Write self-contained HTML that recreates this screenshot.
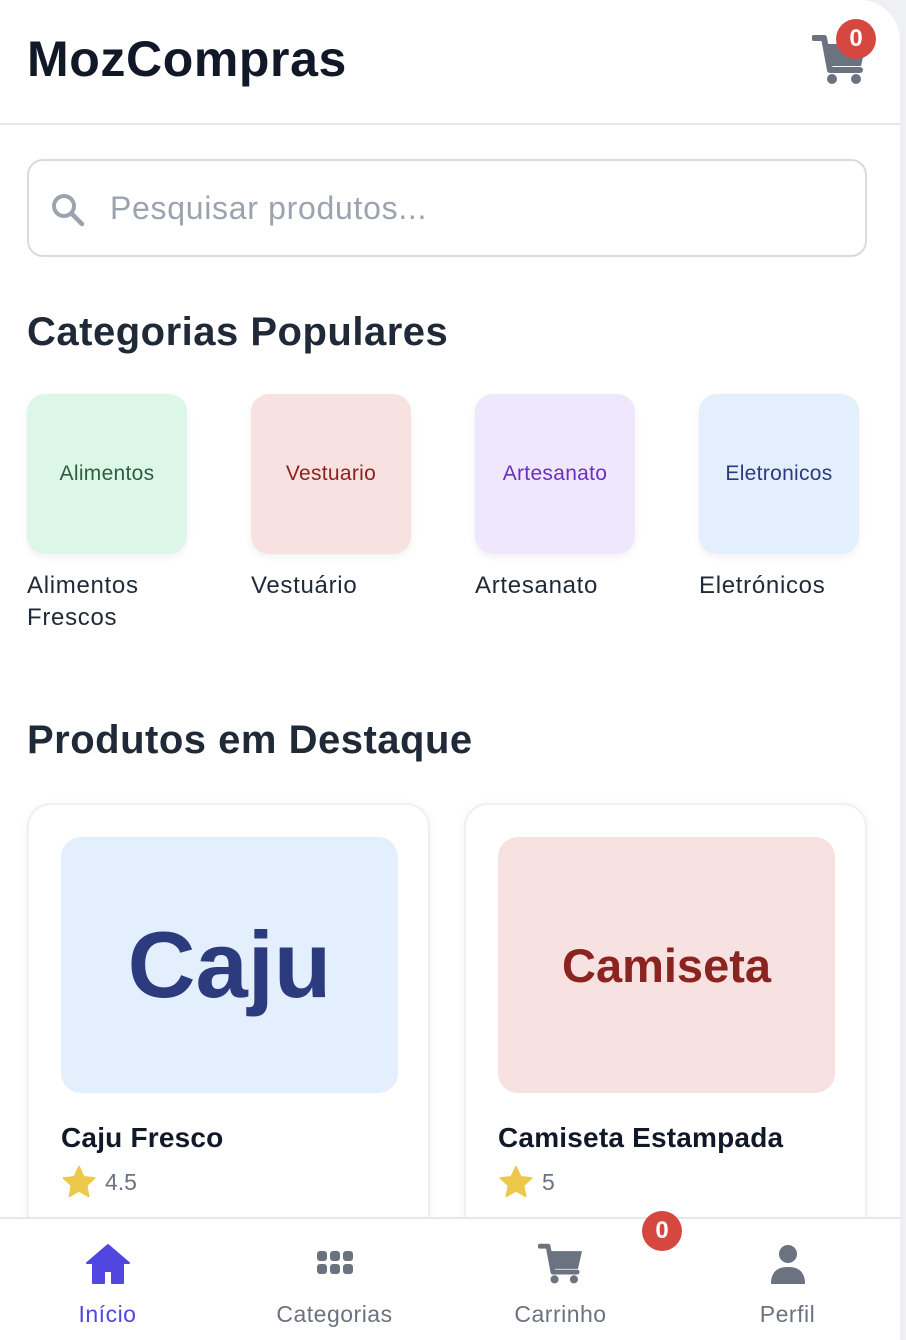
<!DOCTYPE html>
<html><head><meta charset="utf-8"><style>
*{box-sizing:border-box;margin:0;padding:0}
body{width:906px;height:1340px;background:#eef0f3;font-family:"Liberation Sans",sans-serif;overflow:hidden;position:relative}
.page{position:absolute;left:0;top:0;width:900px;height:1340px;background:#fff;border-top-right-radius:40px;overflow:hidden}
.hdr{position:absolute;left:0;top:0;width:900px;height:125px;border-bottom:2px solid #e5e7eb}
.title{position:absolute;left:27px;top:30px;font-size:50px;font-weight:bold;color:#111827;letter-spacing:0.6px}
.badge{position:absolute;background:#d6473f;color:#fff;border-radius:50%;font-weight:bold;text-align:center}
.search{position:absolute;left:27px;top:159px;width:840px;height:98px;border:2px solid #d9dbe0;border-radius:16px}
.search span{position:absolute;left:81px;top:29px;font-size:32px;color:#9ca3af;letter-spacing:0.7px}
h2{position:absolute;left:27px;font-size:40px;font-weight:bold;color:#1f2937;letter-spacing:0.5px}
.cat{position:absolute;top:394px;width:160px;height:160px;border-radius:18px;box-shadow:0 3px 8px rgba(0,0,0,.06);display:flex;align-items:center;justify-content:center;font-size:21px;letter-spacing:0.3px}
.cl{position:absolute;top:570px;font-size:24px;color:#1f2937;line-height:32px;letter-spacing:0.7px}
.card{position:absolute;top:803px;width:403px;height:460px;border:2px solid #f0f0f2;border-radius:24px;box-shadow:0 2px 10px rgba(0,0,0,.05)}
.img{position:absolute;left:32px;top:32px;width:337px;height:256px;border-radius:20px;display:flex;align-items:center;justify-content:center}
.name{position:absolute;left:32px;top:317px;font-size:28px;font-weight:bold;color:#111827;letter-spacing:0.2px}
.rate{position:absolute;left:32px;top:360px;font-size:23px;color:#6b7280;display:flex;align-items:center;gap:8px}
.nav{position:absolute;left:0;top:1217px;width:900px;height:123px;background:#fff;border-top:2px solid #e5e7eb}
.ni{position:absolute;top:0;width:225px;text-align:center}
.ni svg{position:absolute;top:24px;left:50%;transform:translateX(-50%)}
.ni span{position:absolute;top:82px;left:0;width:100%;font-size:23px;color:#6b7280;letter-spacing:0.5px}
</style></head><body>
<div class="page">
<div class="hdr">
<div class="title">MozCompras</div>
<svg style="position:absolute;left:812px;top:34px" width="56" height="52" viewBox="0 0 56 52"><path d="M2 4h10l6 32h30" fill="none" stroke="#6b7280" stroke-width="6" stroke-linecap="round" stroke-linejoin="round"/><path d="M14 10h40l-5 22H18z" fill="#6b7280"/><circle cx="20" cy="45" r="5" fill="#6b7280"/><circle cx="44" cy="45" r="5" fill="#6b7280"/></svg>
<div class="badge" style="left:836px;top:19px;width:40px;height:40px;line-height:40px;font-size:24px">0</div>
</div>
<div class="search">
<svg style="position:absolute;left:22px;top:32px" width="34" height="34" viewBox="0 0 34 34"><circle cx="13" cy="13" r="10" fill="none" stroke="#9ca3af" stroke-width="4"/><path d="M21 21l10 10" stroke="#9ca3af" stroke-width="4.5" stroke-linecap="round"/></svg>
<span>Pesquisar produtos...</span>
</div>
<h2 style="top:310px">Categorias Populares</h2>
<div class="cat" style="left:27px;background:#dcf7e7;color:#2d5f3f">Alimentos</div>
<div class="cat" style="left:251px;background:#f7e1e1;color:#8b2320">Vestuario</div>
<div class="cat" style="left:475px;background:#efe7fc;color:#6d2fc0">Artesanato</div>
<div class="cat" style="left:699px;background:#e3effc;color:#2c3a7e">Eletronicos</div>
<div class="cl" style="left:27px">Alimentos<br>Frescos</div>
<div class="cl" style="left:251px">Vestuário</div>
<div class="cl" style="left:475px">Artesanato</div>
<div class="cl" style="left:699px">Eletrónicos</div>
<h2 style="top:718px">Produtos em Destaque</h2>
<div class="card" style="left:27px">
<div class="img" style="background:#e3effc;color:#2c3a7e;font-size:94px;font-weight:bold">Caju</div>
<div class="name">Caju Fresco</div>
<div class="rate"><svg width="36" height="34" viewBox="0 0 24 23"><path d="M12 1l3.2 6.9 7.5.9-5.5 5.1 1.4 7.4L12 17.6 5.4 21.3l1.4-7.4L1.3 8.8l7.5-.9z" fill="#ecc94b" stroke="#ecc94b" stroke-linejoin="round"/></svg>4.5</div>
</div>
<div class="card" style="left:464px">
<div class="img" style="background:#f7e1e1;color:#8b2320;font-size:47px;font-weight:bold">Camiseta</div>
<div class="name">Camiseta Estampada</div>
<div class="rate"><svg width="36" height="34" viewBox="0 0 24 23"><path d="M12 1l3.2 6.9 7.5.9-5.5 5.1 1.4 7.4L12 17.6 5.4 21.3l1.4-7.4L1.3 8.8l7.5-.9z" fill="#ecc94b" stroke="#ecc94b" stroke-linejoin="round"/></svg>5</div>
</div>
<div class="nav">
<div class="ni" style="left:-5px"><svg width="48" height="42" viewBox="0 0 48 42"><path d="M24 2L3 20h6v20h11V28h8v12h11V20h6z" fill="#5146e0" stroke="#5146e0" stroke-linejoin="round" stroke-width="2"/></svg><span style="color:#5146e0">Início</span></div>
<div class="ni" style="left:222px"><svg width="40" height="40" viewBox="0 0 40 40"><g fill="#6b7280"><rect x="2" y="8" width="10" height="10" rx="3"/><rect x="15" y="8" width="10" height="10" rx="3"/><rect x="28" y="8" width="10" height="10" rx="3"/><rect x="2" y="21" width="10" height="10" rx="3"/><rect x="15" y="21" width="10" height="10" rx="3"/><rect x="28" y="21" width="10" height="10" rx="3"/></g></svg><span>Categorias</span></div>
<div class="ni" style="left:448px"><svg width="46" height="42" viewBox="0 0 56 52"><path d="M2 4h10l6 32h30" fill="none" stroke="#6b7280" stroke-width="6" stroke-linecap="round" stroke-linejoin="round"/><path d="M14 10h40l-5 22H18z" fill="#6b7280"/><circle cx="20" cy="45" r="5" fill="#6b7280"/><circle cx="44" cy="45" r="5" fill="#6b7280"/></svg><span>Carrinho</span></div>
<div class="badge" style="left:642px;top:-8px;width:40px;height:40px;line-height:40px;font-size:24px">0</div>
<div class="ni" style="left:675px"><svg width="40" height="42" viewBox="0 0 40 42"><circle cx="20" cy="11" r="9" fill="#6b7280"/><path d="M3 41c0-12 6-17 17-17s17 5 17 17z" fill="#6b7280"/></svg><span>Perfil</span></div>
</div>
</div>
</body></html>
